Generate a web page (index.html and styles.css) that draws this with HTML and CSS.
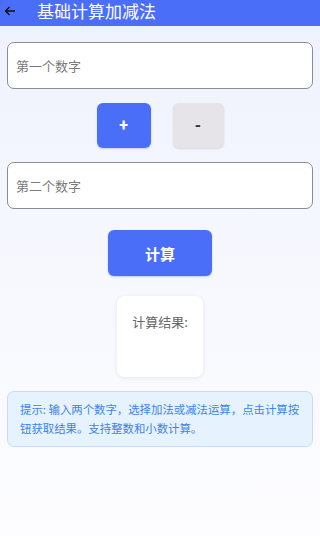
FILE: index.html
```html
<!DOCTYPE html>
<html lang="zh">
<head>
<meta charset="utf-8">
<title>基础计算加减法</title>
<link rel="stylesheet" href="styles.css">
</head>
<body>
<header class="bar">
  <svg class="back" width="12" height="12" viewBox="0 0 12 12"><path d="M11 6H1.5M5.5 2L1.5 6l4 4" fill="none" stroke="#111" stroke-width="1.3"/></svg>
  <span class="title">基础计算加减法</span>
</header>
<main class="page">
  <div class="field"><span class="ph">第一个数字</span></div>
  <div class="ops">
    <div class="op op-plus">+</div>
    <div class="op op-minus">-</div>
  </div>
  <div class="field"><span class="ph">第二个数字</span></div>
  <div class="calc">计算</div>
  <div class="result">计算结果:</div>
  <div class="tip">提示: 输入两个数字，选择加法或减法运算，点击计算按钮获取结果。支持整数和小数计算。</div>
</main>
</body>
</html>
```
FILE: styles.css
```css
html, body {
  margin: 0;
  padding: 0;
}
body {
  width: 320px;
  height: 536px;
  overflow: hidden;
  font-family: "Noto Sans CJK SC", "Noto Sans", sans-serif;
  background: linear-gradient(180deg, #eef2fd 0%, #f6f8fe 50%, #fdfdff 100%);
}
.bar {
  height: 26px;
  background: #4b6ef8;
  display: flex;
  align-items: flex-start;
}
.back {
  margin: 5px 0 0 4px;
}
.title {
  margin: 1px 0 0 21px;
  color: #fff;
  font-size: 17px;
  line-height: 20px;
}
.page {
  padding: 16px 7px 0;
  display: flex;
  flex-direction: column;
}
.field {
  height: 45px;
  border: 1px solid #8d8b92;
  border-radius: 7px;
  background: #fff;
  display: flex;
  align-items: center;
  padding-left: 8px;
}
.ph {
  font-size: 13px;
  color: #7a7a7a;
}
.ops {
  display: flex;
  justify-content: center;
  gap: 22px;
  margin: 14px 0;
}
.op {
  height: 45px;
  border-radius: 6px;
  display: flex;
  align-items: center;
  justify-content: center;
  font-size: 16px;
  font-weight: bold;
  font-family: "Roboto", "Noto Sans", sans-serif;
}
.op-plus {
  width: 54px;
  background: #4b6ef8;
  color: #fff;
  box-shadow: 0 1px 2px rgba(40, 60, 160, 0.2);
}
.op-minus {
  width: 51px;
  background: #e6e4e9;
  color: #333;
  box-shadow: 0 1px 2px rgba(0, 0, 0, 0.12);
}
.calc {
  align-self: center;
  width: 104px;
  height: 46px;
  margin-top: 21px;
  border-radius: 6px;
  background: #4b6ef8;
  color: #fff;
  font-size: 15px;
  font-weight: bold;
  display: flex;
  align-items: center;
  justify-content: center;
  box-shadow: 0 1px 2px rgba(40, 60, 160, 0.25);
}
.result {
  align-self: center;
  width: 86px;
  height: 81px;
  box-sizing: border-box;
  margin-top: 20px;
  padding-top: 17px;
  border-radius: 7px;
  background: #fff;
  color: #666;
  font-size: 13px;
  line-height: 18px;
  text-align: center;
  box-shadow: 0 1px 4px rgba(0, 0, 0, 0.08);
}
.tip {
  margin-top: 14px;
  padding: 8px 12px;
  border: 1px solid #c2ddf5;
  border-radius: 7px;
  background: #e6f2fd;
  color: #3d84e6;
  font-size: 11.4px;
  line-height: 19px;
}
```
